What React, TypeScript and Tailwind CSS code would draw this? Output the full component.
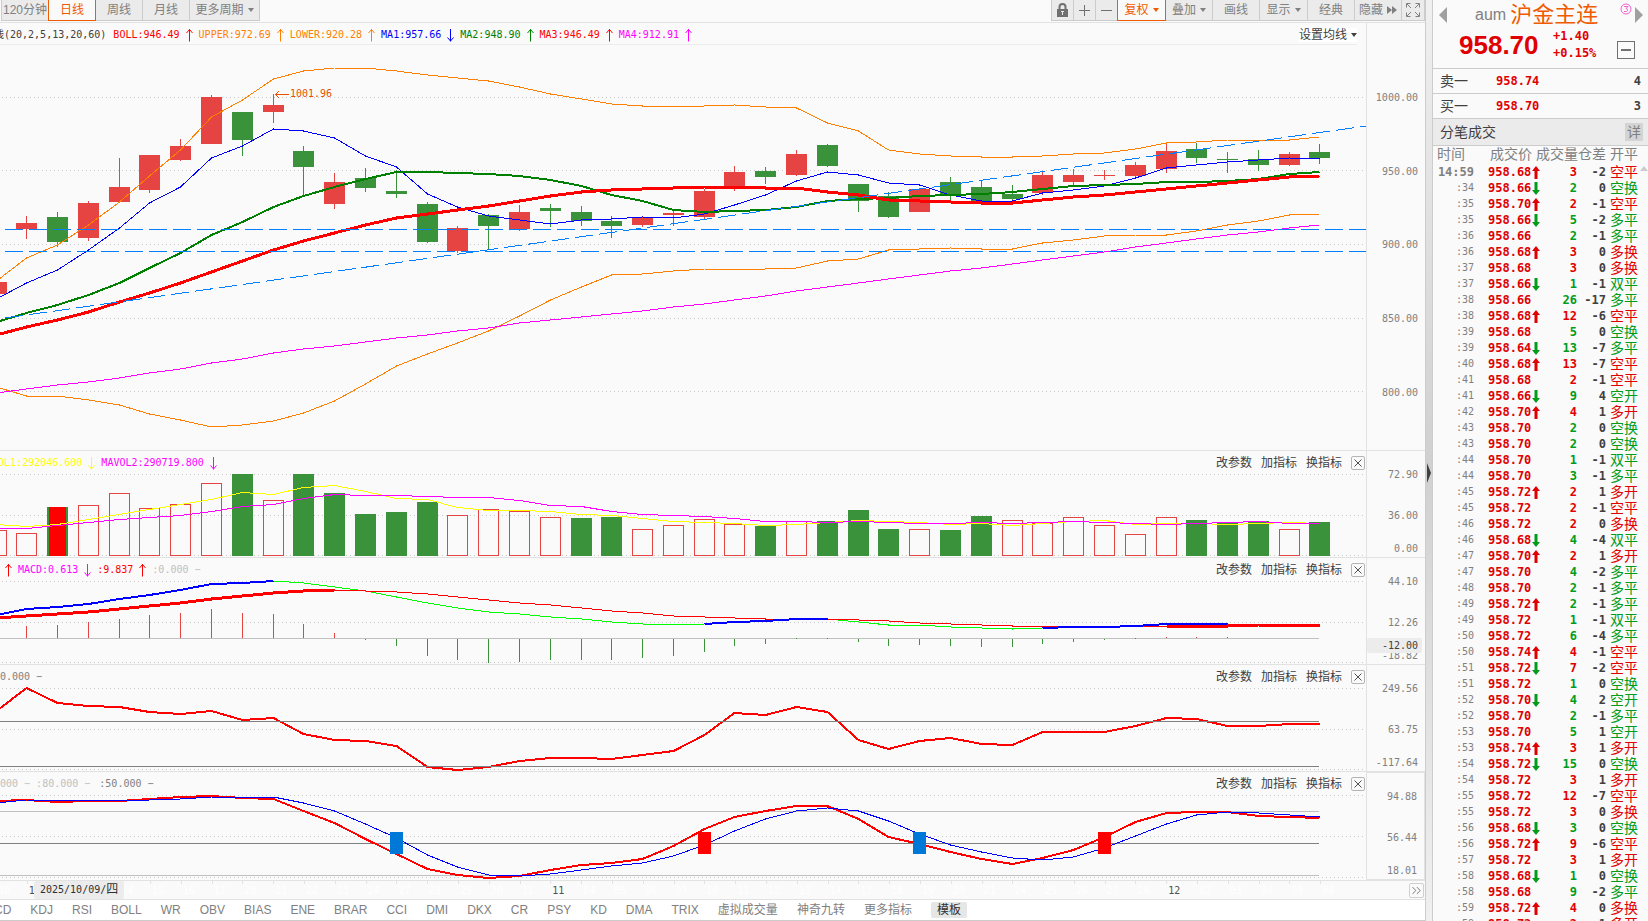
import React from "react";
import { ChevronsRight } from "lucide-react";

const RED = "#e64442";
const GREEN = "#3a923a";

// bars start one step left of the visible area
const barX = (i: number) => Math.floor(26.8 + 30.79 * i) + 0.5;

const linePoints = (values: number[], from = -1) =>
  values.map((v, i) => `${barX(from + i)},${v}`).join(" ");

// [up, high, bodyTop, bodyBottom, low]
const candles: [number, number, number, number, number][] = [
  [1, 282, 282, 294, 294],
  [1, 216, 223, 229, 239],
  [0, 212, 217, 242, 247],
  [1, 201, 203, 238, 241],
  [1, 158, 187, 202, 202],
  [1, 155, 155, 190, 193],
  [1, 139, 146, 160, 161],
  [1, 95, 97, 144, 144],
  [0, 112, 112, 140, 156],
  [1, 94, 105, 112, 123],
  [0, 146, 151, 167, 195],
  [1, 173, 182, 204, 209],
  [0, 168, 178, 188, 192],
  [0, 170, 191, 194, 198],
  [0, 202, 204, 242, 243],
  [1, 226, 228, 251, 253],
  [0, 214, 215, 226, 250],
  [1, 205, 212, 229, 231],
  [0, 204, 208, 211, 227],
  [0, 206, 212, 221, 226],
  [0, 216, 221, 226, 238],
  [1, 217, 218, 225, 227],
  [1, 211, 213, 215, 226],
  [1, 189, 191, 217, 219],
  [1, 166, 172, 187, 191],
  [0, 167, 171, 177, 184],
  [1, 150, 154, 175, 176],
  [0, 144, 145, 166, 167],
  [0, 184, 184, 201, 212],
  [0, 192, 196, 217, 218],
  [1, 188, 189, 212, 212],
  [0, 177, 182, 196, 201],
  [0, 181, 187, 202, 203],
  [0, 185, 194, 199, 202],
  [1, 172, 175, 193, 195],
  [1, 169, 175, 182, 186],
  [1, 170, 175, 176, 180],
  [1, 162, 165, 176, 177],
  [1, 144, 151, 169, 173],
  [0, 143, 149, 158, 163],
  [0, 152, 159, 160, 173],
  [0, 150, 159, 165, 171],
  [1, 152, 154, 165, 166],
  [0, 144, 152, 158, 164],
];

const upper = [281, 258, 245, 225, 202, 176, 150, 117, 100, 79, 71, 68, 68, 71, 75, 78, 81, 87, 94, 99, 104, 106, 106, 106, 105, 107, 108, 123, 131, 150, 154, 156, 157, 157, 156, 154, 153, 149, 143, 142, 140, 140, 140, 137];
const lower = [387, 396, 396, 400, 405, 414, 420, 427, 425, 421, 413, 401, 384, 366, 354, 343, 331, 316, 300, 287, 275, 274, 271, 269, 269, 269, 268, 261, 259, 250, 249, 248, 249, 249, 243, 240, 236, 235, 235, 231, 225, 221, 215, 214];
const ma1 = [299, 283, 270, 250, 228, 203, 187, 158, 146, 129, 131, 138, 156, 167, 194, 207, 216, 220, 224, 220, 219, 217, 218, 214, 205, 195, 181, 172, 175, 183, 185, 195, 201, 201, 193, 190, 186, 178, 168, 165, 162, 160, 158, 159];
const ma2 = [322, 313, 305, 295, 283, 268, 253, 235, 222, 207, 196, 187, 179, 172, 172, 173, 174, 176, 180, 186, 195, 201, 210, 212, 211, 210, 207, 201, 199, 198, 196, 195, 194, 192, 189, 186, 185, 184, 182, 182, 181, 179, 174, 172];
const ma3 = [335, 327, 320, 312, 302, 293, 283, 272, 261, 250, 241, 233, 225, 218, 214, 210, 206, 201, 196, 192, 190, 189, 188, 187, 187, 188, 188, 192, 195, 200, 201, 202, 203, 203, 200, 197, 195, 192, 189, 186, 183, 180, 177, 176];
const ma4 = [393, 389, 385, 382, 378, 373, 369, 363, 359, 353, 349, 346, 342, 338, 335, 331, 328, 323, 320, 317, 314, 311, 307, 304, 300, 296, 291, 287, 283, 279, 275, 271, 268, 264, 260, 256, 252, 247, 243, 239, 235, 232, 228, 225];

const volumeTops = [530, 533, 507, 505, 493, 508, 504, 483, 474, 500, 474, 493, 514, 512, 502, 515, 509, 511, 517, 518, 517, 529, 525, 519, 524, 526, 521, 521, 510, 529, 529, 530, 516, 520, 523, 517, 525, 534, 517, 520, 523, 521, 529, 522];
const volumeDown = [1, 7, 9, 10, 11, 12, 13, 18, 19, 24, 26, 27, 28, 30, 31, 38, 39, 40, 42];
const mavol1 = [524, 526, 524, 519, 514, 509, 504, 499, 492, 494, 487, 485, 491, 498, 499, 507, 510, 510, 511, 514, 515, 518, 521, 522, 523, 525, 524, 522, 520, 521, 522, 524, 523, 525, 523, 521, 520, 524, 523, 523, 524, 523, 522, 523];
const mavol2 = [528, 528, 525, 522, 519, 517, 515, 511, 506, 504, 498, 494, 495, 495, 496, 497, 497, 500, 505, 506, 511, 514, 515, 516, 518, 521, 521, 522, 521, 522, 523, 523, 522, 523, 522, 521, 522, 523, 524, 523, 522, 521, 523, 523];

const dif = [615, 609, 607, 604, 599, 595, 590, 584, 583, 581, 583, 587, 591, 597, 603, 608, 612, 614, 617, 619, 622, 624, 625, 624, 622, 621, 619, 619, 622, 625, 625, 627, 628, 629, 628, 627, 627, 626, 624, 624, 624, 625, 625, 625];
const dea = [618, 616, 614, 612, 609, 606, 603, 599, 596, 593, 591, 590, 591, 592, 594, 597, 600, 603, 605, 608, 611, 613, 616, 617, 618, 619, 619, 619, 620, 621, 623, 624, 625, 626, 626, 626, 626, 626, 626, 626, 626, 625, 625, 625];
const macdBars = [626, 625, 622, 619, 615, 613, 609, 613, 614, 624, 633, 640, 646, 656, 660, 663, 662, 660, 660, 660, 658, 656, 652, 646, 644, 638, 638, 642, 646, 645, 646, 647, 647, 644, 642, 640, 638, 637, 637, 637];

const cci = [711, 688, 703, 706, 707, 712, 714, 711, 720, 718, 734, 740, 741, 746, 767, 770, 767, 761, 758, 758, 759, 755, 751, 735, 713, 715, 707, 712, 740, 749, 741, 738, 744, 745, 732, 732, 732, 726, 718, 719, 726, 726, 724, 724];
const kdjK = [801, 800, 802, 801, 801, 799, 797, 796, 798, 799, 811, 823, 839, 854, 869, 875, 878, 876, 870, 865, 863, 859, 846, 829, 817, 811, 806, 806, 819, 837, 844, 852, 859, 864, 858, 850, 837, 822, 813, 812, 812, 816, 817, 818];
const kdjD = [803, 800, 800, 800, 801, 800, 799, 797, 797, 797, 803, 811, 824, 838, 855, 867, 875, 876, 874, 870, 866, 863, 856, 845, 831, 819, 811, 808, 811, 821, 834, 845, 852, 858, 860, 857, 848, 836, 824, 815, 812, 813, 815, 817];

// M marks the first bar of a month, two slots stay free under the date tag
const axisDates = "30 M1 _ _ 14 15 16 17 20 21 22 23 24 27 28 29 30 31 M11 04 05 06 07 10 11 12 13 14 17 18 19 20 21 24 25 26 27 28 M12 02 03 04 05 08".split(" ");

// time, price, tick direction, lots, open interest change, kind
const ticks = `14:59 958.68 u 3 -2 空平 r
:34 958.66 d 2 0 空换 g
:35 958.70 u 2 -1 空平 r
:35 958.66 d 5 -2 多平 g
:36 958.66 - 2 -1 多平 g
:36 958.68 u 3 0 多换 r
:37 958.68 - 3 0 多换 r
:37 958.66 d 1 -1 双平 g
:38 958.66 - 26 -17 多平 g
:38 958.68 u 12 -6 空平 r
:39 958.68 - 5 0 空换 g
:39 958.64 d 13 -7 多平 g
:40 958.68 u 13 -7 空平 r
:41 958.68 - 2 -1 空平 r
:41 958.66 d 9 4 空开 g
:42 958.70 u 4 1 多开 r
:43 958.70 - 2 0 空换 g
:43 958.70 - 2 0 空换 g
:44 958.70 - 1 -1 双平 g
:44 958.70 - 3 -1 多平 g
:45 958.72 u 2 1 多开 r
:45 958.72 - 2 -1 空平 r
:46 958.72 - 2 0 多换 r
:46 958.68 d 4 -4 双平 g
:47 958.70 u 2 1 多开 r
:47 958.70 - 4 -2 多平 g
:48 958.70 - 2 -1 多平 g
:49 958.72 u 2 -1 多平 g
:49 958.72 - 1 -1 双平 g
:50 958.72 - 6 -4 多平 g
:50 958.74 u 4 -1 空平 r
:51 958.72 d 7 -2 空平 r
:51 958.72 - 1 0 空换 g
:52 958.70 d 4 2 空开 g
:52 958.70 - 2 -1 多平 g
:53 958.70 - 5 1 空开 g
:53 958.74 u 3 1 多开 r
:54 958.72 d 15 0 空换 g
:54 958.72 - 3 1 多开 r
:55 958.72 - 12 -7 空平 r
:55 958.72 - 3 0 多换 r
:56 958.68 d 3 0 空换 g
:56 958.72 u 9 -6 空平 r
:57 958.72 - 3 1 多开 r
:58 958.68 d 1 0 空换 g
:58 958.68 - 9 -2 多平 g
:59 958.72 u 4 0 多换 r
:59 958.72 - 2 1 多开 r`
  .split("\n")
  .map((row) => row.split(" "));

const indicators = ["MACD", "KDJ", "RSI", "BOLL", "WR", "OBV", "BIAS", "ENE", "BRAR", "CCI", "DMI", "DKX", "CR", "PSY", "KD", "DMA", "TRIX", "虚拟成交量", "神奇九转", "更多指标"];

function Line({
  points,
  color,
  width = 1,
}: {
  points: string;
  color: string;
  width?: number;
}) {
  return (
    <polyline
      points={points}
      fill="none"
      stroke={color}
      strokeWidth={width}
      vectorEffect="non-scaling-stroke"
    />
  );
}

function Plot({
  top,
  height,
  grid,
  children,
}: {
  top: number;
  height: number;
  grid: number[];
  children: React.ReactNode;
}) {
  return (
    <svg
      viewBox={`0 ${top} 1366 ${height}`}
      preserveAspectRatio="none"
      shapeRendering="crispEdges"
      className="block min-h-0 w-full flex-1"
    >
      {grid.map((y) => (
        <path
          key={y}
          d={`M2 ${y + 0.5}H1366`}
          stroke="#c8c8c8"
          strokeDasharray="1 3"
        />
      ))}
      {children}
    </svg>
  );
}

function Trend({ down = false }: { down?: boolean }) {
  return (
    <svg width="19" height="14" className="shrink-0" fill="none" stroke="currentColor">
      <path d={down ? "M9.5 1V13.5M6.5 9.5L9.5 13L12.5 9.5" : "M9.5 13.5V1M6.5 5L9.5 1.5L12.5 5"} />
    </svg>
  );
}

function Caret() {
  return (
    <svg width="6" height="4" fill="currentColor">
      <path d="M0 0H6L3 4Z" />
    </svg>
  );
}

function PanelMenu() {
  return (
    <div className="ml-auto flex items-center gap-[9px] pr-px text-xs text-[#404040]">
      <button>改参数</button>
      <button>加指标</button>
      <button>换指标</button>
      <button
        aria-label="关闭"
        className="flex h-[14px] w-[14px] items-center justify-center rounded-xs border border-[#b4b4b4]"
      >
        <svg width="8" height="8" stroke="#505050">
          <path d="M0.5 0.5L7.5 7.5M7.5 0.5L0.5 7.5" />
        </svg>
      </button>
    </div>
  );
}

function IndicatorPanel({
  legend,
  labels,
  className = "h-[107px]",
  axisClassName = "border-l border-[#e2e2e2]",
  children,
}: {
  legend: React.ReactNode;
  labels: string[];
  className?: string;
  axisClassName?: string;
  children: React.ReactNode;
}) {
  return (
    <section className={`flex shrink-0 border-b border-[#e2e2e2] ${className}`}>
      <div className="flex min-w-0 flex-1 flex-col">
        <div className="flex h-[22px] shrink-0 items-center whitespace-nowrap pt-px font-['DejaVu_Sans_Mono','Noto_Sans_CJK_SC',monospace] text-[10px]">
          {legend}
          <PanelMenu />
        </div>
        {children}
      </div>
      <div
        className={`relative w-[59px] shrink-0 pt-[18px] pr-[7px] text-right font-['DejaVu_Sans_Mono',monospace] text-[10px] leading-[12px] text-[#808080] ${axisClassName}`}
      >
        <div>{labels[0]}</div>
        <div className="mt-[29px]">{labels[1]}</div>
        <div className="mt-[21px]">{labels[2]}</div>
        {labels[3] && (
          <div className="absolute top-[80px] right-[3px] left-0 rounded-xs bg-[#ececec] pr-1 leading-[15px] text-[#404040]">
            {labels[3]}
          </div>
        )}
      </div>
    </section>
  );
}

function ToolButton({
  className = "",
  active = false,
  label,
  children,
}: {
  className?: string;
  active?: boolean;
  label?: string;
  children: React.ReactNode;
}) {
  return (
    <button
      aria-label={label}
      className={`-mr-px flex h-[21px] items-center justify-center gap-1 whitespace-nowrap border border-t-0 ${
        active
          ? "z-10 border-[#f05a00] bg-[#fafafa] text-[#f05a00]"
          : "border-[#cccccc] bg-[#ebebeb] text-[#808080]"
      } ${className}`}
    >
      {children}
    </button>
  );
}

function Toolbar() {
  return (
    <div className="flex h-[23px] shrink-0 justify-between border-b border-[#e2e2e2] text-xs">
      <div className="flex">
        <ToolButton className="ml-px w-[48px]">120分钟</ToolButton>
        <ToolButton active className="w-[48px]">
          日线
        </ToolButton>
        <ToolButton className="w-[48px]">周线</ToolButton>
        <ToolButton className="w-[48px]">月线</ToolButton>
        <ToolButton className="w-[71px]">
          更多周期 <Caret />
        </ToolButton>
      </div>
      <div className="flex pr-px">
        <ToolButton label="锁定" className="w-[23px]">
          <svg width="13" height="14" fill="none" stroke="#707070">
            <path d="M3.5 6V4Q3.5 1 6.5 1T9.5 4V6" strokeWidth="2" />
            <rect x="1" y="6" width="11" height="8" fill="#707070" stroke="none" />
            <path d="M5 8.5H8M6.5 8V12" stroke="#ebebeb" />
          </svg>
        </ToolButton>
        <ToolButton label="放大" className="w-[23px]">
          <svg width="11" height="11" stroke="#707070">
            <path d="M0 5.5H11M5.5 0V11" />
          </svg>
        </ToolButton>
        <ToolButton label="缩小" className="w-[23px]">
          <svg width="11" height="11" stroke="#707070">
            <path d="M0 5.5H11" />
          </svg>
        </ToolButton>
        <ToolButton active className="w-[49px]">
          复权 <Caret />
        </ToolButton>
        <ToolButton className="w-[48px]">
          叠加 <Caret />
        </ToolButton>
        <ToolButton className="w-[48px]">画线</ToolButton>
        <ToolButton className="w-[49px]">
          显示 <Caret />
        </ToolButton>
        <ToolButton className="w-[48px]">经典</ToolButton>
        <ToolButton className="w-[48px]">
          隐藏
          <svg width="10" height="8" fill="currentColor">
            <path d="M0 0L5 4L0 8ZM5 0L10 4L5 8Z" />
          </svg>
        </ToolButton>
        <ToolButton label="全屏" className="w-[24px]">
          <svg width="14" height="14" fill="none" stroke="currentColor">
            <path d="M0.5 4.5V0.5H4.5M9.5 0.5H13.5V4.5M0.5 9.5V13.5H4.5M9.5 13.5H13.5V9.5M1 1L5 5M13 1L9 5M1 13L5 9M13 13L9 9" />
          </svg>
        </ToolButton>
      </div>
    </div>
  );
}

function MainChart() {
  return (
    <section className="flex min-h-0 flex-1 border-b border-[#e2e2e2]">
      <div className="relative flex min-w-0 flex-1 flex-col">
        <div className="mr-[9px] flex h-[22px] shrink-0 items-center whitespace-nowrap border-b border-[#ececec] pt-[2px] font-['DejaVu_Sans_Mono','Noto_Sans_CJK_SC',monospace] text-[10px]">
          <span className="mr-[7px] -ml-[6px] text-[#404040]">线(20,2,5,13,20,60)</span>
          <span className="text-[#ff0000]">BOLL:946.49</span>
          <span className="text-[#ff0000]"><Trend /></span>
          <span className="text-[#ff8000]">UPPER:972.69</span>
          <span className="text-[#ff8000]"><Trend /></span>
          <span className="text-[#ff8000]">LOWER:920.28</span>
          <span className="text-[#ff8000]"><Trend /></span>
          <span className="text-[#0000ff]">MA1:957.66</span>
          <span className="text-[#0000ff]"><Trend down /></span>
          <span className="text-[#008000]">MA2:948.90</span>
          <span className="text-[#008000]"><Trend /></span>
          <span className="text-[#ff0000]">MA3:946.49</span>
          <span className="text-[#ff0000]"><Trend /></span>
          <span className="text-[#ff00ff]">MA4:912.91</span>
          <span className="text-[#ff00ff]"><Trend /></span>
          <button className="ml-auto flex items-center gap-1 bg-white text-xs leading-[14px] text-[#404040]">
            设置均线 <Caret />
          </button>
        </div>
        <Plot top={45} height={405} grid={[97, 170, 244, 318, 391]}>
          {candles.map(([up, high, top, bottom, low], i) => {
            const x = barX(i - 1);
            const color = up ? RED : GREEN;
            return (
              <g key={i}>
                <path d={`M${x} ${high}V${low}`} stroke={color} />
                <rect x={x - 10.5} y={top} width="21" height={bottom - top} fill={color} />
              </g>
            );
          })}
          <Line points={linePoints(upper)} color="#ff8000" />
          <Line points={linePoints(lower)} color="#ff8000" />
          <Line points={linePoints(ma4)} color="#ff00ff" />
          <Line points={linePoints(ma1)} color="#0000ff" />
          <Line points={linePoints(ma2)} color="#008000" width={2} />
          <Line points={linePoints(ma3)} color="#ff0000" width={3} />
          <path
            d="M5 229.5H1366M5 251.5H1366M5 318L1366 126"
            stroke="#0080ff"
            strokeDasharray="18 6"
            fill="none"
          />
          <path
            d="M289 94.5H275.5M279 91L275.5 94.5L279 98"
            stroke="#e65000"
            fill="none"
          />
        </Plot>
        <span
          className="absolute top-[65px] font-['DejaVu_Sans_Mono',monospace] text-[10px] leading-[12px] text-[#e65000]"
          style={{ left: `${(290 / 1366) * 100}%` }}
        >
          1001.96
        </span>
      </div>
      <div className="flex w-[59px] shrink-0 flex-col border-l border-[#e2e2e2] pt-[38px] pr-[7px] pb-[21px] font-['DejaVu_Sans_Mono',monospace] text-[10px] text-[#808080]">
        {["1000.00", "950.00", "900.00", "850.00", "800.00"].map((p) => (
          <div key={p} className="flex flex-1 items-center justify-end">
            {p}
          </div>
        ))}
      </div>
    </section>
  );
}

function VolumePanel() {
  return (
    <IndicatorPanel
      labels={["72.90", "36.00", "0.00"]}
      legend={
        <>
          <span className="-ml-5 text-[#ffff00]">MAVOL1:292046.600</span>
          <span className="text-[#ffff00]"><Trend down /></span>
          <span className="text-[#ff00ff]">MAVOL2:290719.800</span>
          <span className="text-[#ff00ff]"><Trend down /></span>
        </>
      }
    >
      <Plot top={473} height={84} grid={[474, 515, 555]}>
        {volumeTops.map((y, i) => {
          const x = barX(i - 1);
          return volumeDown.includes(i - 1) ? (
            <rect key={i} x={x - 10.5} y={y} width="21" height={556 - y} fill={GREEN} />
          ) : (
            <rect key={i} x={x - 10} y={y + 0.5} width="20" height={555 - y} fill="none" stroke={RED} />
          );
        })}
        <rect x="49" y="507" width="17" height="49" fill="#ff0000" />
        <Line points={linePoints(mavol1.map((v) => v + 0.5))} color="#ffff00" />
        <Line points={linePoints(mavol2.map((v) => v + 0.5))} color="#ff00ff" />
      </Plot>
    </IndicatorPanel>
  );
}

function MacdPanel() {
  return (
    <IndicatorPanel
      labels={["44.10", "12.26", "-18.82", "-12.00"]}
      legend={
        <>
          <span className="-ml-px text-[#ff0000]"><Trend /></span>
          <span className="text-[#ff00ff]">MACD:0.613</span>
          <span className="text-[#ff00ff]"><Trend down /></span>
          <span className="text-[#ff0000]">:9.837</span>
          <span className="text-[#ff0000]"><Trend /></span>
          <span className="text-[#c0c0c0]">:0.000 −</span>
        </>
      }
    >
      <Plot top={580} height={84} grid={[581, 622, 662]}>
        <path d="M0 638.5H1319" stroke="#c0c0c0" />
        {macdBars.map((y, i) => (
          <path key={i} d={`M${barX(i)} ${y < 638 ? 638 : 639}V${y}`} stroke={y < 638 ? RED : GREEN} />
        ))}
        <Line points={linePoints(dif.slice(9), 8)} color="#00ff00" />
        <Line points={linePoints(dea)} color="#ff0000" />
        <Line points={linePoints(dif.slice(0, 10))} color="#0000ff" width={2} />
        <Line points={linePoints(dif.slice(23, 28), 22)} color="#0000ff" width={2} />
        <Line points={linePoints(dif.slice(34, 41), 33)} color="#0000ff" width={2} />
        <Line points={linePoints(dea.slice(0, 12))} color="#ff0000" width={3} />
        <Line points={linePoints(dea.slice(38), 37)} color="#ff0000" width={3} />
      </Plot>
    </IndicatorPanel>
  );
}

function CciPanel() {
  return (
    <IndicatorPanel
      labels={["249.56", "63.75", "-117.64"]}
      legend={<span className="text-[#808080]">0.000 −</span>}
    >
      <Plot top={687} height={84} grid={[688, 729, 769]}>
        <Line points={linePoints(cci)} color="#ff0000" width={2} />
        <path d="M0 721.5H1319M0 766.5H1319" stroke="#808080" />
      </Plot>
    </IndicatorPanel>
  );
}

function KdjPanel() {
  return (
    <IndicatorPanel
      className="h-[109px]"
      axisClassName="border border-[#e2e2e2]"
      labels={["94.88", "56.44", "18.01"]}
      legend={
        <>
          <span className="text-[#c0c0c0]">000 − :80.000 −&nbsp;</span>
          <span className="ml-[3px] text-[#808080]">:50.000 −</span>
        </>
      }
    >
      <Plot top={794} height={86} grid={[795, 836, 877]}>
        <path d="M0 811.5H1319M0 875.5H1319" stroke="#c0c0c0" />
        <path d="M0 843.5H1319" stroke="#808080" />
        <Line points={linePoints(kdjK)} color="#ff0000" width={2} />
        <Line points={linePoints(kdjD)} color="#0000ff" />
        {[12, 22, 29, 35].map((i, n) => (
          <rect
            key={i}
            x={barX(i) - 6.5}
            y="832"
            width="13"
            height="22"
            fill={n % 2 ? "#ff0000" : "#0078d7"}
          />
        ))}
      </Plot>
    </IndicatorPanel>
  );
}

function DateAxis() {
  return (
    <div className="relative flex h-[19px] shrink-0 items-center border-b border-[#e2e2e2] font-['DejaVu_Sans_Mono',monospace] text-[10px]">
      <div className="-ml-[4px] flex h-full min-w-0 flex-1">
        {axisDates.map((d, i) => (
          <span
            key={i}
            className={`min-w-0 flex-1 leading-[20px] ${d.startsWith("M") ? "text-[#505050]" : "text-white"}`}
          >
            <span className="block h-0">
              <span className="block h-[3px] w-px bg-[#e2e2e2]" />
            </span>
            <span className="pl-[2px]">{d.replace(/[M_]/, "")}</span>
          </span>
        ))}
      </div>
      <div className="flex w-[74px] shrink-0 justify-end">
        <button
          aria-label="更多"
          className="mr-px flex h-[15px] w-[15px] items-center justify-center rounded-xs border border-[#d0d0d0] text-[#707070]"
        >
          <ChevronsRight size={15} strokeWidth={1.5} className="shrink-0" />
        </button>
      </div>
      <div className="absolute top-0 left-[34px] h-[18px] rounded-xs bg-[#ececec] px-[6px] font-['DejaVu_Sans_Mono','Noto_Sans_CJK_SC',monospace] leading-[18px] text-[#303030]">
        2025/10/09/<span className="text-xs leading-[12px]">四</span>
      </div>
    </div>
  );
}

function IndicatorTabs() {
  return (
    <nav className="flex h-[21px] shrink-0 items-center gap-[19px] whitespace-nowrap border-b border-[#cccccc] bg-white text-xs text-[#808080]">
      {indicators.map((name) => (
        <a key={name} href="#" className="first:-ml-6">
          {name}
        </a>
      ))}
      <button className="rounded-xs bg-[#e6e6e6] px-[6px] leading-4 text-[#303030]">
        模板
      </button>
    </nav>
  );
}

function QuotePanel() {
  return (
    <aside className="flex w-[215px] shrink-0 flex-col overflow-hidden">
      <div className="flex h-[30px] shrink-0 items-center">
        <button aria-label="上一个" className="ml-[6px] text-[#a0a0a0]">
          <svg width="8" height="16" fill="currentColor">
            <path d="M8 0V16L0 8Z" />
          </svg>
        </button>
        <span className="ml-[28px] text-base text-[#808080]">aum</span>
        <span className="ml-1 text-[22px] leading-[26px] whitespace-nowrap text-[#f05a00]">
          沪金主连
        </span>
        <svg width="12" height="12" className="mb-[12px] ml-auto" fill="none" stroke="#f060d0">
          <circle cx="6" cy="6" r="5" />
          <path d="M4 3.5H8L6 5.5Q8 6 7.5 7.5T4 8.5" />
        </svg>
        <button aria-label="下一个" className="mr-[5px] ml-[3px] text-[#a0a0a0]">
          <svg width="8" height="16" fill="currentColor">
            <path d="M0 0V16L8 8Z" />
          </svg>
        </button>
      </div>
      <div className="flex h-[39px] shrink-0 items-center border-b border-[#cccccc] pb-[8px]">
        <span className="ml-[26px] w-[79px] text-[26px] leading-[30px] font-bold text-[#e00000]">
          958.70
        </span>
        <div className="ml-[15px] font-['DejaVu_Sans_Mono',monospace] text-xs leading-[17px] font-bold text-[#e00000]">
          <div>+1.40</div>
          <div>+0.15%</div>
        </div>
        <button
          aria-label="收起"
          className="mt-[9px] mr-[13px] ml-auto flex h-[18px] w-[18px] items-center justify-center border border-[#707070]"
        >
          <svg width="10" height="2" fill="#707070">
            <path d="M0 0H10V2H0Z" />
          </svg>
        </button>
      </div>
      {[
        ["卖一", "958.74", "4"],
        ["买一", "958.70", "3"],
      ].map(([side, price, lots]) => (
        <div
          key={side}
          className="flex h-[25px] shrink-0 items-center border-b border-[#cccccc] pr-[7px] pl-[7px] text-sm text-[#404040]"
        >
          <span className="w-[56px]">{side}</span>
          <span className="font-['DejaVu_Sans_Mono',monospace] text-xs font-bold text-[#e00000]">
            {price}
          </span>
          <span className="ml-auto font-['DejaVu_Sans_Mono',monospace] text-xs font-bold">
            {lots}
          </span>
        </div>
      ))}
      <div className="flex h-[27px] shrink-0 items-center justify-between border-b border-[#cccccc] bg-[#ebebeb] pr-[5px] pl-[7px] text-sm text-[#404040]">
        分笔成交
        <button className="h-[18px] w-[18px] bg-[#d4d4d4] leading-[18px] text-[#808080]">
          详
        </button>
      </div>
      <div className="relative">
        <table className="w-full table-fixed border-collapse font-['DejaVu_Sans_Mono','Noto_Sans_CJK_SC',monospace] text-xs whitespace-nowrap">
          <colgroup>
            <col className="w-[41px]" />
            <col className="w-[62px]" />
            <col className="w-[41px]" />
            <col className="w-[29px]" />
            <col />
          </colgroup>
          <thead>
            <tr className="h-[18px] text-sm leading-4 text-[#808080]">
              <th className="p-0 pl-1 text-left align-top font-normal">时间</th>
              <th className="p-0 pl-4 text-left align-top font-normal">成交价</th>
              <th className="p-0 text-left align-top font-normal">成交量</th>
              <th className="p-0 text-right align-top font-normal">仓差</th>
              <th className="p-0 pl-1 text-left align-top font-normal">开平</th>
            </tr>
          </thead>
          <tbody>
            {ticks.map(([time, price, dir, lots, diff, kind, side], i) => (
              <tr key={i} className="h-4 leading-4">
                <td
                  className={`p-0 text-right text-[#808080] ${i === 0 ? "font-bold" : "text-[10px]"}`}
                >
                  {time}
                </td>
                <td className="p-0 pl-[14px] font-bold text-[#e00000]">
                  <div className="flex items-center">
                    {price}
                    {dir !== "-" && (
                      <svg
                        width="8"
                        height="13"
                        fill={dir === "u" ? "#e00000" : "#009c1a"}
                        className="ml-px shrink-0"
                      >
                        <path
                          d={
                            dir === "u"
                              ? "M4 0L8 5H5.5V13H2.5V5H0Z"
                              : "M4 13L8 8H5.5V0H2.5V8H0Z"
                          }
                        />
                      </svg>
                    )}
                  </div>
                </td>
                <td
                  className={`p-0 text-right font-bold ${side === "r" ? "text-[#e00000]" : "text-[#009c1a]"}`}
                >
                  {lots}
                </td>
                <td className="p-0 text-right font-bold text-[#404040]">{diff}</td>
                <td
                  className={`p-0 pl-1 text-sm leading-4 ${side === "r" ? "text-[#e00000]" : "text-[#009c1a]"}`}
                >
                  {kind}
                </td>
              </tr>
            ))}
          </tbody>
        </table>
        <svg width="8" height="5" fill="#cccccc" className="absolute top-[20px] right-0">
          <path d="M0 5L4 0L8 5Z" />
        </svg>
      </div>
    </aside>
  );
}

export default function App() {
  return (
    <div className="flex h-screen overflow-hidden bg-[#fafafa] font-['Liberation_Sans','Noto_Sans_CJK_SC',sans-serif]">
      <main className="flex min-w-0 flex-1 flex-col overflow-hidden">
        <Toolbar />
        <MainChart />
        <VolumePanel />
        <MacdPanel />
        <CciPanel />
        <KdjPanel />
        <DateAxis />
        <IndicatorTabs />
      </main>
      <div className="flex w-2 shrink-0 items-center border-x border-[#cccccc] bg-linear-to-b from-[#f0f0f0] via-[#d0d0d0] to-[#f0f0f0]">
        <svg width="5" height="20" fill="#404040" className="mt-[24px]">
          <path d="M1 0L5 10L1 20Z" />
        </svg>
      </div>
      <QuotePanel />
    </div>
  );
}
